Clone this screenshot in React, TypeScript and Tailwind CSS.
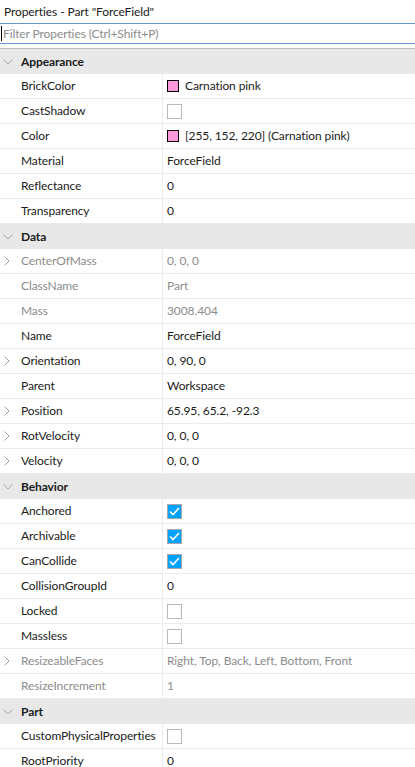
import React from "react";

type Row = {
    name: string;
    value?: string;
    kind?: "text" | "color" | "check";
    checked?: boolean;
    disabled?: boolean;
    expandable?: boolean;
};

type Section = { title: string; rows: Row[] };

const SECTIONS: Section[] = [
    {
        title: "Appearance",
        rows: [
            { name: "BrickColor", kind: "color", value: "Carnation pink" },
            { name: "CastShadow", kind: "check", checked: false },
            { name: "Color", kind: "color", value: "[255, 152, 220] (Carnation pink)" },
            { name: "Material", value: "ForceField" },
            { name: "Reflectance", value: "0" },
            { name: "Transparency", value: "0" },
        ],
    },
    {
        title: "Data",
        rows: [
            { name: "CenterOfMass", value: "0, 0, 0", disabled: true, expandable: true },
            { name: "ClassName", value: "Part", disabled: true },
            { name: "Mass", value: "3008.404", disabled: true },
            { name: "Name", value: "ForceField" },
            { name: "Orientation", value: "0, 90, 0", expandable: true },
            { name: "Parent", value: "Workspace" },
            { name: "Position", value: "65.95, 65.2, -92.3", expandable: true },
            { name: "RotVelocity", value: "0, 0, 0", expandable: true },
            { name: "Velocity", value: "0, 0, 0", expandable: true },
        ],
    },
    {
        title: "Behavior",
        rows: [
            { name: "Anchored", kind: "check", checked: true },
            { name: "Archivable", kind: "check", checked: true },
            { name: "CanCollide", kind: "check", checked: true },
            { name: "CollisionGroupId", value: "0" },
            { name: "Locked", kind: "check", checked: false },
            { name: "Massless", kind: "check", checked: false },
            { name: "ResizeableFaces", value: "Right, Top, Back, Left, Bottom, Front", disabled: true, expandable: true },
            { name: "ResizeIncrement", value: "1", disabled: true },
        ],
    },
    {
        title: "Part",
        rows: [
            { name: "CustomPhysicalProperties", kind: "check", checked: false },
            { name: "RootPriority", value: "0" },
        ],
    },
];

function ChevronDown() {
    return (
        <svg width="10" height="6" viewBox="0 0 10 6" className="block">
            <path d="M0.5 0.5 L5 5 L9.5 0.5" fill="none" stroke="#a8a8a8" strokeWidth="1" />
        </svg>
    );
}

function ChevronRight() {
    return (
        <svg width="6" height="10" viewBox="0 0 6 10" className="block">
            <path d="M0.5 0.5 L5 5 L0.5 9.5" fill="none" stroke="#a0a0a0" strokeWidth="1" />
        </svg>
    );
}

function Checkbox({ checked }: { checked?: boolean }) {
    if (checked) {
        return (
            <div className="w-[15px] h-[15px] border border-[#a8a8a8] bg-[#00a2ff] flex items-center justify-center">
                <svg width="11" height="9" viewBox="0 0 11 9">
                    <path d="M1 4.5 L4 7.5 L10 1" fill="none" stroke="#ffffff" strokeWidth="1.6" />
                </svg>
            </div>
        );
    }
    return <div className="w-[15px] h-[15px] border border-[#b8b8b8] bg-white" />;
}

function PropRow({ row }: { row: Row }) {
    const textColor = row.disabled ? "text-[#8c8c8c]" : "text-[#1b1b1b]";
    return (
        <div className="flex h-[25px] border-b border-[#ececec]">
            <div className="w-[163px] flex-shrink-0 flex items-center border-r border-[#ececec]">
                <div className="w-[21px] flex-shrink-0 flex items-center pl-[4px]">
                    {row.expandable && <ChevronRight />}
                </div>
                <span className={`whitespace-nowrap ${textColor}`}>{row.name}</span>
            </div>
            <div className="flex-1 min-w-0 flex items-center pl-[4px]">
                {row.kind === "check" && <Checkbox checked={row.checked} />}
                {row.kind === "color" && (
                    <>
                        <div className="w-[12px] h-[12px] border border-black bg-[#ff98dc] mr-[6px] flex-shrink-0" />
                        <span className={`whitespace-nowrap ${textColor}`}>{row.value}</span>
                    </>
                )}
                {(!row.kind || row.kind === "text") && (
                    <span className={`whitespace-nowrap ${textColor}`}>{row.value}</span>
                )}
            </div>
        </div>
    );
}

export default function App() {
    return (
        <div
            className="w-[415px] h-[767px] overflow-hidden bg-white text-[12px] leading-[16px] tracking-[-0.1px]"
            style={{ fontFamily: "Lato, 'Liberation Sans', sans-serif" }}
        >
            {/* Title bar */}
            <div className="h-[23px] flex items-center pl-[4px] text-[#1b1b1b]">
                Properties - Part "ForceField"
            </div>

            {/* Filter */}
            <div className="h-[21px] border-y border-[#6b96d6] flex items-center">
                <div className="w-px h-[15px] bg-black ml-[1px]" />
                <span className="text-[#8c8c8c] ml-[1px]">Filter Properties (Ctrl+Shift+P)</span>
            </div>

            <div className="h-[4px]" />

            {/* Property list */}
            <div className="border-t border-[#bdbdbd]">
                {SECTIONS.map((section) => (
                    <div key={section.title}>
                        <div className="h-[25px] bg-[#e8e8e8] flex items-center">
                            <div className="w-[21px] flex-shrink-0 flex items-center pl-[3px]">
                                <ChevronDown />
                            </div>
                            <span className="font-bold text-[#1b1b1b]">{section.title}</span>
                        </div>
                        {section.rows.map((row) => (
                            <PropRow key={row.name} row={row} />
                        ))}
                    </div>
                ))}
            </div>
        </div>
    );
}
